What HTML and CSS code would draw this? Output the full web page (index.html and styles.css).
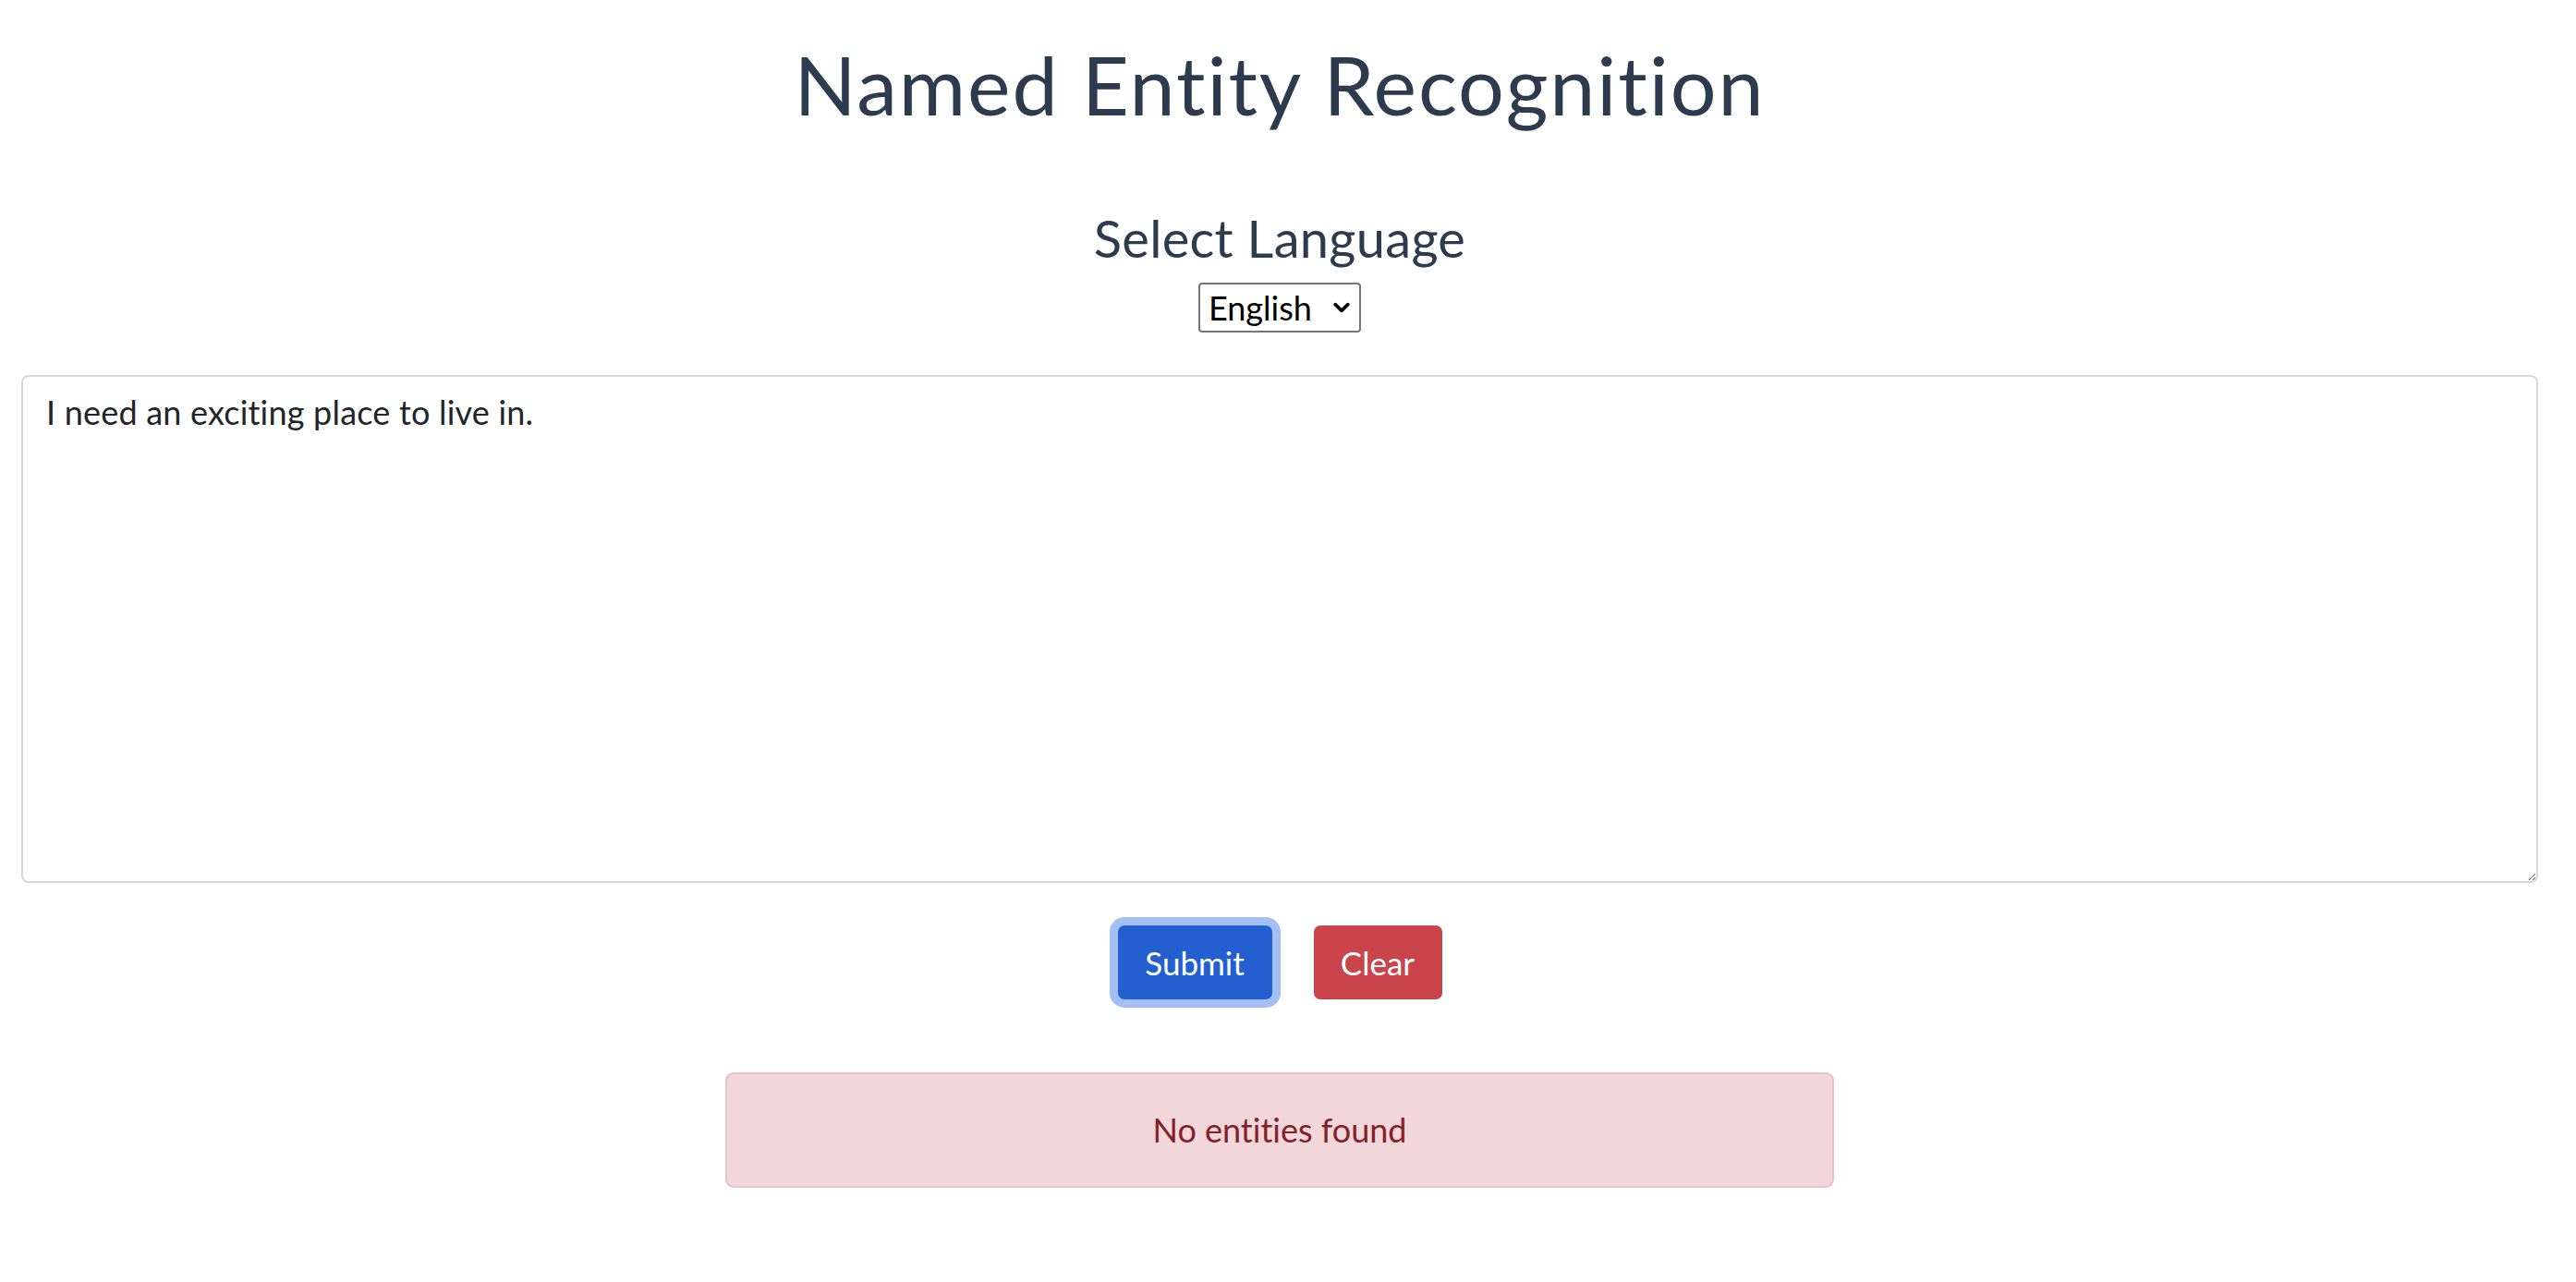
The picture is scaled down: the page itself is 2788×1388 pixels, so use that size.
FILE: index.html
```html
<!DOCTYPE html>
<html lang="en">
<head>
<meta charset="utf-8">
<title>Named Entity Recognition</title>
<link rel="stylesheet" href="styles.css">
</head>
<body>
<main class="page">
  <h1 class="title">Named Entity Recognition</h1>
  <h3 class="subtitle">Select Language</h3>
  <div class="select-wrap">
    <select class="lang-select">
      <option>English</option>
    </select>
    <svg class="select-chevron" viewBox="0 0 16 10" aria-hidden="true">
      <path d="M2 2 L8 8 L14 2" fill="none" stroke="#000" stroke-width="3.2" stroke-linecap="round" stroke-linejoin="round"/>
    </svg>
  </div>
  <textarea class="input-text">I need an exciting place to live in.</textarea>
  <div class="actions">
    <button class="btn btn-primary">Submit</button>
    <button class="btn btn-danger">Clear</button>
  </div>
  <div class="alert">No entities found</div>
</main>
</body>
</html>
```
FILE: styles.css
```css
html, body {
  margin: 0;
  padding: 0;
  background: #ffffff;
}

body {
  font-family: Lato, "Noto Sans", sans-serif;
  color: #212529;
  font-variant-ligatures: none;
}

.page {
  display: flex;
  flex-direction: column;
  align-items: center;
  padding: 0 41px 0 23px;
}

.title {
  margin: 39px 0 0;
  font-size: 88px;
  line-height: 1.2;
  font-weight: 400;
  letter-spacing: 1.9px;
  color: #2c3b4d;
}

.subtitle {
  margin: 79px 0 0;
  font-size: 56px;
  line-height: 1.2;
  font-weight: 400;
  letter-spacing: 0.3px;
  color: #2c3b4d;
}

.select-wrap {
  position: relative;
  margin-top: 15px;
  width: 176px;
  height: 54px;
}

.lang-select {
  appearance: none;
  -webkit-appearance: none;
  box-sizing: border-box;
  width: 176px;
  height: 54px;
  font-family: Lato, "Noto Sans", sans-serif;
  font-size: 36px;
  color: #000;
  border: 2px solid #767676;
  border-radius: 4px;
  background: #fff;
  padding: 0 0 0 9px;
}

.select-chevron {
  position: absolute;
  right: 12px;
  top: 21px;
  width: 18px;
  height: 12px;
  pointer-events: none;
}

.input-text {
  box-sizing: border-box;
  margin-top: 46px;
  width: 100%;
  height: 550px;
  padding: 11px 25px;
  font-family: Lato, "Noto Sans", sans-serif;
  font-size: 36px;
  line-height: 1.5;
  letter-spacing: 0.2px;
  color: #212529;
  border: 2px solid #d6d8db;
  border-radius: 8px;
  resize: both;
}

.actions {
  margin-top: 46px;
  display: flex;
  gap: 45px;
}

.btn {
  box-sizing: border-box;
  height: 80px;
  border: none;
  border-radius: 7px;
  font-family: Lato, "Noto Sans", sans-serif;
  font-size: 35px;
  color: #fff;
  padding: 0;
}

.btn-primary {
  width: 167px;
  background: #245fcf;
  box-shadow: 0 0 0 9px #a3c0f6;
}

.btn-danger {
  width: 139px;
  background: #c9444b;
}

.alert {
  box-sizing: border-box;
  margin-top: 79px;
  width: 1200px;
  height: 125px;
  display: flex;
  align-items: center;
  justify-content: center;
  background: #f2d7da;
  border: 2px solid #ecc0c5;
  border-radius: 9px;
  color: #842029;
  font-size: 36px;
}
```
